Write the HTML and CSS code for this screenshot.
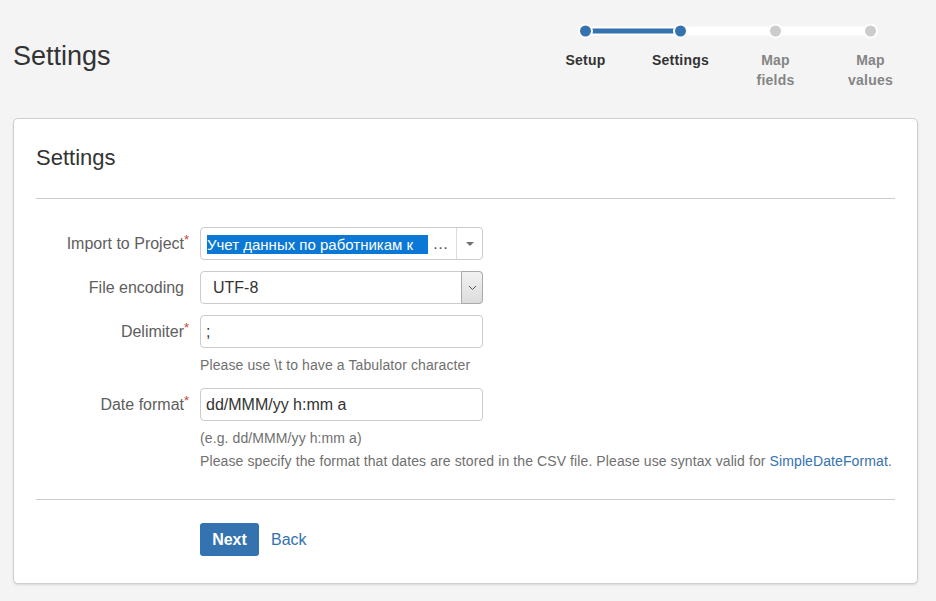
FILE: index.html
```html
<!DOCTYPE html>
<html>

<head>
    <title>Settings</title>
    <link rel="stylesheet" href="styles.css">
</head>

<body>
    <header class="page-header">
        <h1 class="page-title">Settings</h1>
        <div class="stepper">
            <svg class="track" width="380" height="24" viewBox="0 0 380 24">
                <line x1="47.5" y1="12" x2="332.5" y2="12" stroke="#ffffff" stroke-width="9" stroke-linecap="round"/>
                <line x1="47.5" y1="12" x2="142.5" y2="12" stroke="#3572b0" stroke-width="5"/>
                <circle cx="47.5" cy="12" r="7.5" fill="#ffffff"/>
                <circle cx="47.5" cy="12" r="5.5" fill="#3572b0"/>
                <circle cx="142.5" cy="12" r="7.5" fill="#ffffff"/>
                <circle cx="142.5" cy="12" r="5.5" fill="#3572b0"/>
                <circle cx="237.5" cy="12" r="7.5" fill="#ffffff"/>
                <circle cx="237.5" cy="12" r="5.5" fill="#cccccc"/>
                <circle cx="332.5" cy="12" r="7.5" fill="#ffffff"/>
                <circle cx="332.5" cy="12" r="5.5" fill="#cccccc"/>
            </svg>
            <ol class="step-list">
                <li class="step done">Setup</li>
                <li class="step done">Settings</li>
                <li class="step">Map<br>fields</li>
                <li class="step">Map<br>values</li>
            </ol>
        </div>
    </header>

    <div class="card">
        <h2 class="card-title">Settings</h2>
        <hr class="divider">

        <form class="settings-form">
            <div class="field-row">
                <label class="field-label">Import to Project<span class="req">*</span></label>
                <div class="field">
                    <div class="project-select">
                        <span class="project-value"><span class="redacted">Учет данных по работникам к</span> …</span>
                        <span class="project-caret">
                            <svg width="10" height="6" viewBox="0 0 10 6"><path d="M1 1h8L5 5z" fill="#707070"/></svg>
                        </span>
                    </div>
                </div>
            </div>

            <div class="field-row">
                <label class="field-label">File encoding</label>
                <div class="field">
                    <div class="encoding-select">
                        <span class="encoding-value">UTF-8</span>
                        <span class="encoding-btn">
                            <svg width="9" height="6" viewBox="0 0 9 6"><path d="M1 1l3.5 3.5L8 1" fill="none" stroke="#555" stroke-width="1"/></svg>
                        </span>
                    </div>
                </div>
            </div>

            <div class="field-row">
                <label class="field-label">Delimiter<span class="req">*</span></label>
                <div class="field">
                    <input class="text-input" type="text" value=";">
                    <div class="help first">Please use \t to have a Tabulator character</div>
                </div>
            </div>

            <div class="field-row date-row">
                <label class="field-label">Date format<span class="req">*</span></label>
                <div class="field">
                    <input class="text-input" type="text" value="dd/MMM/yy h:mm a">
                    <div class="help first">(e.g. dd/MMM/yy h:mm a)</div>
                    <div class="help">Please specify the format that dates are stored in the CSV file. Please use syntax valid for <a href="#" class="link">SimpleDateFormat</a>.</div>
                </div>
            </div>
        </form>

        <hr class="divider bottom">

        <div class="actions">
            <button class="btn-next" type="button">Next</button>
            <a href="#" class="link back">Back</a>
        </div>
    </div>
</body>

</html>
```

FILE: styles.css
```css
body {
    margin: 0;
    background-color: #f4f4f4;
    font-family: "Liberation Sans", Arial, sans-serif;
    color: #333;
}

.page-header {
    display: flex;
    justify-content: space-between;
    padding: 19px 18px 0 13px;
}

.page-title {
    margin: 21px 0 0;
    font-size: 27px;
    line-height: 32px;
    font-weight: normal;
    color: #333;
}

.stepper {
    width: 380px;
}

.track {
    display: block;
}

.step-list {
    display: flex;
    margin: 7px 0 0;
    padding: 0;
    list-style-type: none;
}

.step {
    width: 95px;
    text-align: center;
    font-size: 14px;
    line-height: 20px;
    font-weight: bold;
    letter-spacing: 0.2px;
    color: #858585;
}

.step.done {
    color: #333;
}

.card {
    margin: 28px 18px 16px 13px;
    padding: 26px 22px 27px 22px;
    background-color: #fff;
    border: 1px solid #cfcfcf;
    border-radius: 5px;
    box-shadow: 0 1px 2px rgba(0, 0, 0, 0.12);
}

.card-title {
    margin: 0;
    font-size: 22px;
    line-height: 26px;
    font-weight: normal;
    color: #333;
}

.divider {
    margin: 27px 0 0;
    border: 0;
    border-top: 1px solid #cccccc;
}

.divider.bottom {
    margin-top: 28px;
}

.settings-form {
    padding-top: 28px;
}

.field-row {
    display: flex;
    margin-bottom: 11px;
}

.field-row.date-row {
    margin-top: 13px;
    margin-bottom: 0;
}

.field-label {
    width: 148px;
    padding-top: 7px;
    text-align: right;
    font-size: 16px;
    line-height: 19px;
    color: #5e5e5e;
}

.req {
    display: inline-block;
    width: 0;
    color: #d04437;
    font-size: 13px;
    vertical-align: top;
    margin-top: -4px;
}

.field {
    margin-left: 16px;
}

.project-select,
.encoding-select {
    display: flex;
    width: 283px;
    height: 33px;
    box-sizing: border-box;
    border: 1px solid #cccccc;
    border-radius: 4px;
    background-color: #fff;
}

.project-value {
    flex: 1;
    padding-left: 6px;
    font-size: 16px;
    line-height: 31px;
    color: #555;
    white-space: nowrap;
    overflow: hidden;
}

.redacted {
    display: inline-block;
    width: 221px;
    overflow: hidden;
    vertical-align: top;
    margin-top: 7px;
    height: 19px;
    line-height: 19px;
    background-color: #0a78d4;
    color: #fff;
    font-size: 15px;
}

.project-caret {
    display: flex;
    align-items: center;
    justify-content: center;
    width: 25px;
    border-left: 1px solid #dcdcdc;
}

.encoding-value {
    flex: 1;
    padding-left: 12px;
    font-size: 16px;
    line-height: 31px;
    color: #333;
}

.encoding-btn {
    display: flex;
    align-items: center;
    justify-content: center;
    width: 20px;
    margin: -1px -1px -1px 0;
    border: 1px solid #a9a9a9;
    border-radius: 0 4px 4px 0;
    background: linear-gradient(#f2f2f2, #dcdcdc);
}

.text-input {
    display: block;
    width: 283px;
    height: 33px;
    box-sizing: border-box;
    padding: 0 5px;
    border: 1px solid #cccccc;
    border-radius: 4px;
    font-family: "Liberation Sans", Arial, sans-serif;
    font-size: 16px;
    color: #333;
}

.help {
    margin-top: 3px;
    font-size: 14px;
    line-height: 20px;
    letter-spacing: 0.1px;
    color: #707070;
    white-space: nowrap;
}

.help.first {
    margin-top: 7px;
}

.link {
    color: #3572b0;
    text-decoration: none;
}

.actions {
    display: flex;
    align-items: center;
    padding: 23px 0 0 164px;
}

.btn-next {
    width: 59px;
    height: 33px;
    border: 0;
    border-radius: 3px;
    background-color: #3572b0;
    color: #fff;
    font-family: "Liberation Sans", Arial, sans-serif;
    font-size: 16px;
    font-weight: bold;
}

.back {
    margin-left: 12px;
    font-size: 16px;
}
```
